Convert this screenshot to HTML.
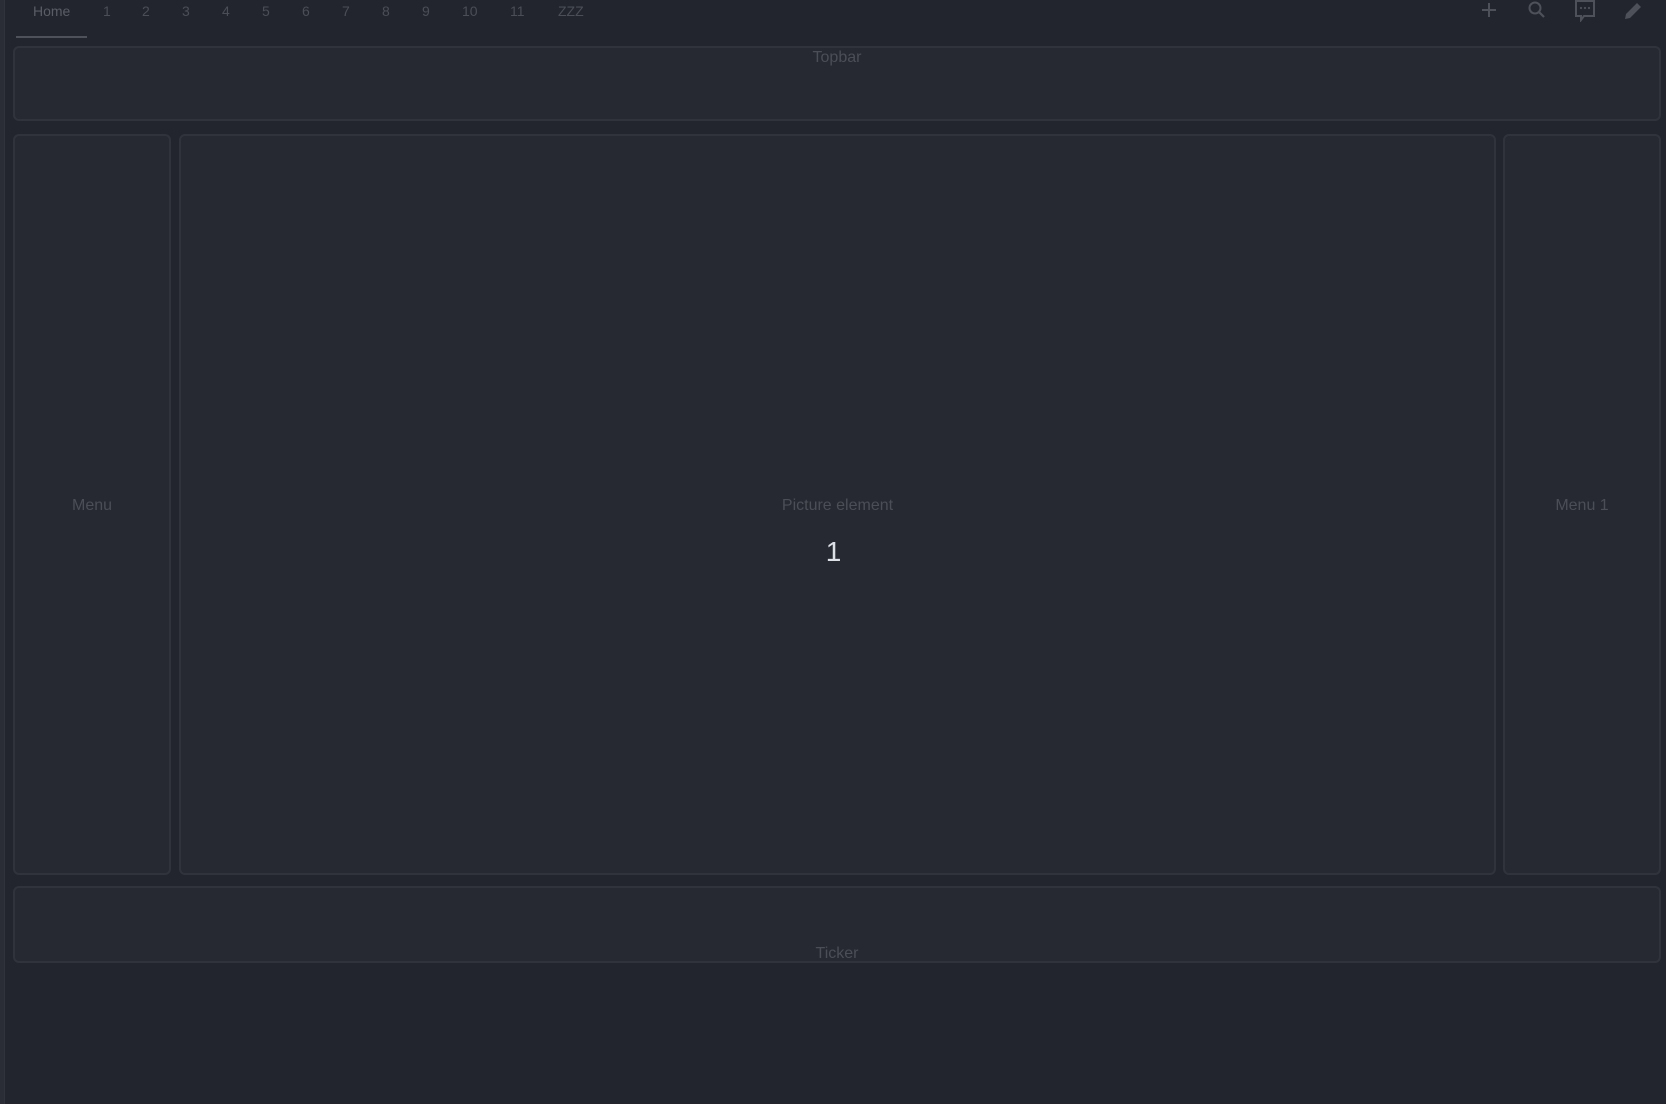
<!DOCTYPE html>
<html><head><meta charset="utf-8"><style>
html,body{margin:0;padding:0}
body{width:1666px;height:1104px;background:#22252d;position:relative;overflow:hidden;font-family:"Liberation Sans",sans-serif}
.strip{position:absolute;left:0;top:0;width:4px;height:1104px;background:#2a2d35;border-right:1px solid #30333b}
.p{position:absolute;background:#262931;border:2px solid #30333b;border-radius:6px;box-sizing:border-box;color:#4b4e56;font-size:16px}
.tab{position:absolute;top:3px;font-size:14px;color:#4b4e56}
.lbl{position:absolute;width:100%;text-align:center}
svg{position:absolute}
</style></head><body>
<div class="strip"></div>
<div class="tab" style="left:33px;color:#5a5d65">Home</div>
<div style="position:absolute;left:16px;top:36px;width:71px;height:2px;background:#4e5159"></div>
<div class="tab" style="left:103px">1</div>
<div class="tab" style="left:142px">2</div>
<div class="tab" style="left:182px">3</div>
<div class="tab" style="left:222px">4</div>
<div class="tab" style="left:262px">5</div>
<div class="tab" style="left:302px">6</div>
<div class="tab" style="left:342px">7</div>
<div class="tab" style="left:382px">8</div>
<div class="tab" style="left:422px">9</div>
<div class="tab" style="left:462px">10</div>
<div class="tab" style="left:510px">11</div>
<div class="tab" style="left:558px">ZZZ</div>
<svg style="left:1477px;top:0" width="24" height="22" viewBox="0 0 24 22"><path d="M12 3v14M5 10h14" stroke="#4e5159" stroke-width="2"/></svg>
<svg style="left:1525px;top:0" width="24" height="22" viewBox="0 0 24 22"><circle cx="10" cy="8" r="5.5" fill="none" stroke="#4e5159" stroke-width="2"/><path d="M14 12l5 5" stroke="#4e5159" stroke-width="2.2"/></svg>
<svg style="left:1573px;top:0" width="24" height="22" viewBox="0 0 24 22"><path d="M3 1h18v15h-10l-3 4v-4h-5z" fill="none" stroke="#4e5159" stroke-width="2"/><circle cx="8" cy="8" r="1.1" fill="#4e5159"/><circle cx="12" cy="8" r="1.1" fill="#4e5159"/><circle cx="16" cy="8" r="1.1" fill="#4e5159"/></svg>
<svg style="left:1621px;top:0" width="24" height="22" viewBox="0 0 24 22"><path d="M4 19l1-5 11-11 4 4-11 11z" fill="#4e5159"/></svg>
<div class="p" style="left:13px;top:46px;width:1648px;height:75px"><div class="lbl" style="top:1px">Topbar</div></div>
<div class="p" style="left:13px;top:134px;width:158px;height:741px"><div class="lbl" style="top:361px">Menu</div></div>
<div class="p" style="left:179px;top:134px;width:1317px;height:741px"><div class="lbl" style="top:361px">Picture element</div><div class="lbl" style="top:400px;font-size:28px;color:#dde0e6;left:-4px">1</div></div>
<div class="p" style="left:1503px;top:134px;width:158px;height:741px"><div class="lbl" style="top:361px">Menu 1</div></div>
<div class="p" style="left:13px;top:886px;width:1648px;height:77px"><div class="lbl" style="top:57px">Ticker</div></div>
</body></html>
